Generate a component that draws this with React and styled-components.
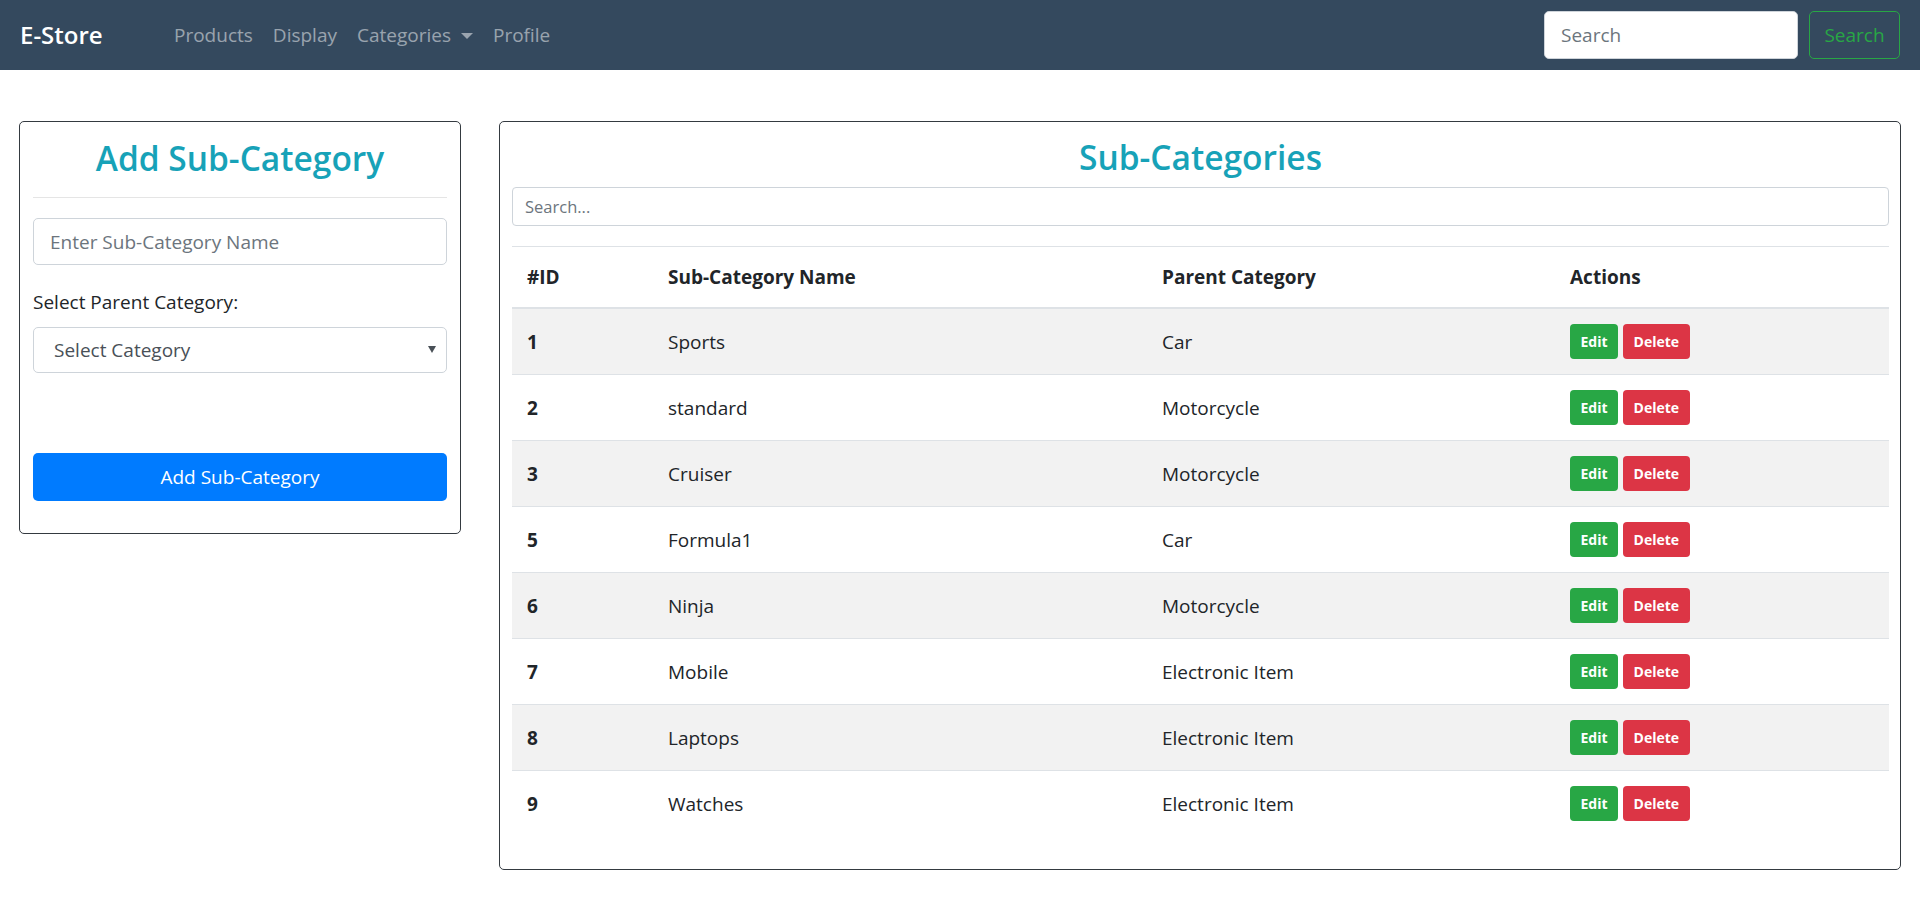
import React from 'react'
import styled, {createGlobalStyle} from 'styled-components'

const GlobalStyle = createGlobalStyle`
	body {
		margin: 0;
		font-family: "Open Sans", "Noto Sans", sans-serif;
		font-size: 19px;
		line-height: 1.5;
		color: #212529;
		background: #fff;
	}
	* { box-sizing: border-box; }
`;

const Navbar = styled.nav`
	height: 70px;
	background: #34495e;
	padding: 0 20px;
	display: flex;
	align-items: center;
`;

const Brand = styled.a`
	width: 144px;
	font-size: 24px;
	font-weight: 600;
	color: #fff;
	line-height: 1.5;
`;

const NavList = styled.ul`
	display: flex;
	list-style: none;
	margin: 1px 0 0;
	padding: 0;
`;

const NavLink = styled.li`
	padding: 0 10px;
	color: rgba(255, 255, 255, 0.5);
	font-size: 19px;
	display: flex;
	align-items: center;
`;

const Caret = styled.span`
	display: inline-block;
	margin-left: 10px;
	border-top: 6px solid rgba(255, 255, 255, 0.5);
	border-left: 6px solid transparent;
	border-right: 6px solid transparent;
`;

const SearchForm = styled.form`
	margin-left: auto;
	display: flex;
	gap: 11px;
`;

const NavInput = styled.input`
	width: 254px;
	height: 48px;
	border: 1px solid #ced4da;
	border-radius: 5px;
	padding: 0 16px;
	font: inherit;
	font-size: 19px;
	color: #495057;
	&::placeholder { color: #6c757d; }
`;

const OutlineButton = styled.button`
	width: 91px;
	height: 48px;
	padding: 0;
	border: 1px solid #28a745;
	border-radius: 5px;
	background: transparent;
	color: #28a745;
	font: inherit;
	font-size: 19px;
`;

const Main = styled.main`
	display: grid;
	grid-template-columns: 442px 1fr;
	column-gap: 38px;
	align-items: start;
	padding: 51px 19px 0;
`;

const Card = styled.section`
	border: 1px solid #343a40;
	border-radius: 5px;
	padding: ${p => p.pad};
	display: flex;
	flex-direction: column;
`;

const Title = styled.h3`
	margin: ${p => p.top}px 0 0;
	text-align: center;
	color: #17a2b8;
	font-size: 33.5px;
	font-weight: 600;
	line-height: 42px;
`;

const Divider = styled.hr`
	margin: 18px 0 20px;
	border: 0;
	border-top: 1px solid rgba(0, 0, 0, 0.1);
`;

const TextInput = styled.input`
	height: 47px;
	width: 100%;
	border: 1px solid #ced4da;
	border-radius: 5px;
	padding: 0 16px;
	font: inherit;
	font-size: 19px;
	color: #495057;
	&::placeholder { color: #6c757d; }
`;

const Label = styled.label`
	margin: 22px 0 10px;
	line-height: 30px;
`;

const SelectWrap = styled.div`
	position: relative;
`;

const Select = styled.select`
	appearance: none;
	width: 100%;
	height: 46px;
	border: 1px solid #ced4da;
	border-radius: 5px;
	padding: 0 20px;
	background: #fff;
	font: inherit;
	font-size: 19px;
	color: #495057;
`;

const SelectArrow = styled.span`
	position: absolute;
	right: 11px;
	top: 19px;
	border-top: 7px solid #495057;
	border-left: 4px solid transparent;
	border-right: 4px solid transparent;
	pointer-events: none;
`;

const PrimaryButton = styled.button`
	margin-top: 80px;
	height: 48px;
	width: 100%;
	border: 0;
	border-radius: 5px;
	background: #007bff;
	color: #fff;
	font: inherit;
	font-size: 19px;
`;

const SmallInput = styled.input`
	margin-top: 9px;
	height: 39px;
	width: 100%;
	border: 1px solid #ced4da;
	border-radius: 4px;
	padding: 0 12px;
	font: inherit;
	font-size: 16.5px;
	color: #495057;
	&::placeholder { color: #6c757d; }
`;

const Table = styled.table`
	margin: 20px 0 20px;
	width: 100%;
	border-collapse: collapse;
	table-layout: fixed;
`;

const HeadCell = styled.th`
	width: ${p => p.w}px;
	padding: 15px;
	text-align: left;
	font-weight: 700;
	line-height: 30px;
	border-top: 1px solid #dee2e6;
	border-bottom: 2px solid #dee2e6;
`;

const Row = styled.tr`
	background: ${p => (p.striped ? '#f2f2f2' : 'transparent')};
	border-top: 1px solid #dee2e6;
`;

const Cell = styled.td`
	padding: 15px;
	height: 65px;
	line-height: 30px;
	vertical-align: middle;
	font-weight: ${p => (p.bold ? 700 : 400)};
`;

const Actions = styled.div`
	display: flex;
	gap: 5px;
`;

const SmallButton = styled.button`
	height: 35px;
	padding: 0 10.5px;
	border: 0;
	border-radius: 4px;
	background: ${p => (p.danger ? '#dc3545' : '#28a745')};
	color: #fff;
	font: inherit;
	font-size: 14px;
	font-weight: 700;
`;

const rows = [
	{id: 1, name: 'Sports', parent: 'Car'},
	{id: 2, name: 'standard', parent: 'Motorcycle'},
	{id: 3, name: 'Cruiser', parent: 'Motorcycle'},
	{id: 5, name: 'Formula1', parent: 'Car'},
	{id: 6, name: 'Ninja', parent: 'Motorcycle'},
	{id: 7, name: 'Mobile', parent: 'Electronic Item'},
	{id: 8, name: 'Laptops', parent: 'Electronic Item'},
	{id: 9, name: 'Watches', parent: 'Electronic Item'},
];

const App = () => (
	<React.Fragment>
		<GlobalStyle/>
		<Navbar>
			<Brand>E-Store</Brand>
			<NavList>
				<NavLink>Products</NavLink>
				<NavLink>Display</NavLink>
				<NavLink>Categories<Caret/></NavLink>
				<NavLink>Profile</NavLink>
			</NavList>
			<SearchForm onSubmit={e => e.preventDefault()}>
				<NavInput placeholder="Search"/>
				<OutlineButton>Search</OutlineButton>
			</SearchForm>
		</Navbar>
		<Main>
			<Card pad="13px 13px 32px">
				<Title top={2}>Add Sub-Category</Title>
				<Divider/>
				<TextInput placeholder="Enter Sub-Category Name"/>
				<Label>Select Parent Category:</Label>
				<SelectWrap>
					<Select defaultValue="">
						<option value="">Select Category</option>
						<option>Car</option>
						<option>Motorcycle</option>
						<option>Electronic Item</option>
					</Select>
					<SelectArrow/>
				</SelectWrap>
				<PrimaryButton>Add Sub-Category</PrimaryButton>
			</Card>
			<Card pad="10px 11px 13px 12px">
				<Title top={4}>Sub-Categories</Title>
				<SmallInput placeholder="Search..."/>
				<Table>
					<thead>
						<tr>
							<HeadCell w={141}>#ID</HeadCell>
							<HeadCell w={494}>Sub-Category Name</HeadCell>
							<HeadCell w={408}>Parent Category</HeadCell>
							<HeadCell>Actions</HeadCell>
						</tr>
					</thead>
					<tbody>
						{rows.map((r, i) => (
							<Row key={r.id} striped={i % 2 === 0}>
								<Cell bold>{r.id}</Cell>
								<Cell>{r.name}</Cell>
								<Cell>{r.parent}</Cell>
								<Cell>
									<Actions>
										<SmallButton>Edit</SmallButton>
										<SmallButton danger>Delete</SmallButton>
									</Actions>
								</Cell>
							</Row>
						))}
					</tbody>
				</Table>
			</Card>
		</Main>
	</React.Fragment>
);

export default App;
